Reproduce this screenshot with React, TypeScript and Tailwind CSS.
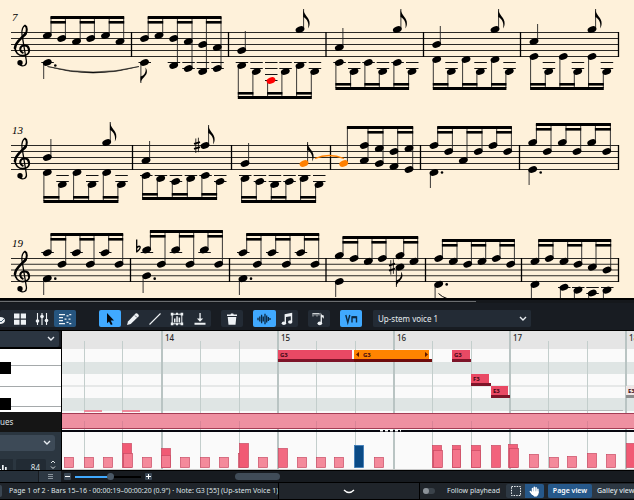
import React from "react";

/* ---------- score data ---------- */
/* Pitches are counted in half staff spaces downward from the top line. */

type Beam = {
  dir: "up" | "down";
  xs: number[];
  notes: number[][];
  y: number;
  pairs?: number[][];
};
type Single = {
  x: number;
  p: number;
  dir: "up" | "down";
  end: number;
  flag?: boolean;
  dot?: boolean;
  sharp?: boolean;
  color?: string;
};
type System = {
  top: number;
  space: number;
  label: string;
  bars: number[];
  beams: Beam[];
  singles: Single[];
};

const alt = (a: number, b: number) => [[a], [b], [a], [b], [a], [b]];
const each = (...p: number[]) => p.map((v) => [v]);

const systems: System[] = [
  {
    top: 32.5,
    space: 6,
    label: "7",
    bars: [131.5, 228.5, 326, 423.5, 520.5, 618.5],
    beams: [
      { dir: "up", xs: [47.3, 61.7, 76.5, 90.7, 105.5, 120], notes: each(1, 2, 3, 2, 1, 3), y: 16 },
      { dir: "up", xs: [144.5, 159, 173.7, 188.3, 202.7, 217.3], notes: [[2], [1], [2, 11], [3, 12], [4, 13], [5, 12]], y: 16 },
      { dir: "down", xs: [241.7, 256.3, 271, 285.3, 300, 314.7], notes: each(11, 13, 16, 13, 11, 13), y: 99 },
      { dir: "down", xs: [339.3, 354, 368.3, 382.7, 397.3, 412], notes: alt(10, 13), y: 90 },
      { dir: "down", xs: [436.7, 451.3, 466, 480.3, 495, 509.3], notes: alt(9, 13), y: 90 },
      { dir: "down", xs: [534, 548.7, 563.3, 577.7, 592, 606.7], notes: alt(8, 13), y: 90 },
    ],
    singles: [
      { x: 47.3, p: 10, dir: "down", end: 79, dot: true },
      { x: 144.5, p: 10, dir: "down", end: 83, flag: true },
      { x: 241.7, p: 6, dir: "up", end: 31 },
      { x: 300, p: -1, dir: "up", end: 9, flag: true },
      { x: 339.3, p: 5, dir: "up", end: 28 },
      { x: 397.3, p: -1, dir: "up", end: 9, flag: true },
      { x: 436.7, p: 4, dir: "up", end: 26 },
      { x: 495, p: -1, dir: "up", end: 9, flag: true },
      { x: 534, p: 3, dir: "up", end: 24 },
      { x: 592, p: -1, dir: "up", end: 9, flag: true },
    ],
  },
  {
    top: 145.5,
    space: 6,
    label: "13",
    bars: [132.5, 231.5, 330.5, 420.5, 519.5, 618.5],
    beams: [
      { dir: "down", xs: [47.3, 62.3, 77, 92, 106.7, 121.3], notes: alt(9, 13), y: 203 },
      { dir: "down", xs: [146, 160.7, 175.7, 190.7, 205.3, 220], notes: each(10, 11, 12, 11, 10, 12), y: 200 },
      { dir: "down", xs: [245, 259.7, 274.7, 289.3, 304, 319], notes: each(11, 12, 13, 12, 11, 13), y: 203 },
      { dir: "up", xs: [343.7, 364.3, 379.3, 394, 409], notes: [[6], [0, 5], [1, 6], [2, 7], [1, 8]], y: 126, pairs: [[1, 2], [3, 4]] },
      { dir: "up", xs: [434, 448.7, 463.3, 478.3, 493, 507.7], notes: each(0, 2, 5, 2, 0, 2), y: 126 },
      { dir: "up", xs: [532.7, 547.3, 562.3, 577, 591.7, 606.7], notes: alt(-1, 2), y: 123 },
    ],
    singles: [
      { x: 47.3, p: 4, dir: "up", end: 139 },
      { x: 106.7, p: -1, dir: "up", end: 122, flag: true },
      { x: 146, p: 5, dir: "up", end: 141 },
      { x: 205, p: 0, dir: "up", end: 125, flag: true, sharp: true },
      { x: 245, p: 6, dir: "up", end: 143 },
      { x: 304, p: 6, dir: "up", end: 142, flag: true, color: "#ff8000" },
      { x: 434, p: 9, dir: "down", end: 188, dot: true },
      { x: 532.7, p: 8, dir: "down", end: 185, dot: true },
    ],
  },
  {
    top: 258.5,
    space: 5.75,
    label: "19",
    bars: [130.5, 229.5, 326, 425.5, 521.5, 618.5],
    beams: [
      { dir: "up", xs: [47.3, 62, 76.3, 90.3, 105, 119], notes: alt(-2, 2), y: 233 },
      { dir: "up", xs: [146.7, 161.3, 175.7, 190, 204.3, 218.7], notes: alt(-3, 2), y: 230 },
      { dir: "up", xs: [243, 257.3, 272, 286.3, 300.7, 315], notes: alt(-2, 2), y: 233 },
      { dir: "up", xs: [339.3, 354, 368.3, 382.3, 400, 414], notes: each(-1, 0, 1, 0, -1, 1), y: 236 },
      { dir: "up", xs: [438.7, 453.3, 467.7, 482, 496.3, 510.7], notes: each(0, 1, 2, 1, 0, 2), y: 239 },
      { dir: "up", xs: [535, 549.3, 564, 578, 592.3, 607], notes: each(1, 0, 1, 2, 3, 4), y: 239 },
    ],
    singles: [
      { x: 47.3, p: 7, dir: "down", end: 295, dot: true },
      { x: 146.7, p: 6, dir: "down", end: 293, dot: true },
      { x: 243, p: 7, dir: "down", end: 295, dot: true },
      { x: 339.3, p: 8, dir: "down", end: 297 },
      { x: 400, p: 3, dir: "down", end: 287, flag: true, sharp: true },
      { x: 438.7, p: 9, dir: "down", end: 300, dot: true },
      { x: 535, p: 9, dir: "down", end: 300 },
      { x: 564, p: 10, dir: "down", end: 300 },
      { x: 578, p: 11, dir: "down", end: 300 },
      { x: 592.3, p: 12, dir: "down", end: 300 },
      { x: 607, p: 11, dir: "down", end: 300 },
    ],
  },
];

function Head({ x, y, p, step, color }: { x: number; y: number; p: number; step: number; color?: string }) {
  const ledgers: number[] = [];
  for (let l = 10; l <= p; l += 2) ledgers.push(l);
  for (let l = -2; l >= p; l -= 2) ledgers.push(l);
  return (
    <g>
      {ledgers.map((l) => {
        const ly = Math.floor(y + (l - p) * step) + 0.5;
        return <line key={l} x1={x - 6} x2={x + 6.5} y1={ly} y2={ly} stroke="#111" />;
      })}
      <ellipse cx={x} cy={y} rx="4.6" ry="3.1" fill={color || "#000"} transform={`rotate(-24 ${x} ${y})`} />
    </g>
  );
}

function Sharp({ x, y }: { x: number; y: number }) {
  return (
    <g stroke="#000" fill="none">
      <path d={`M${x - 1.2} ${y - 7}v14.5M${x + 1.4} ${y - 7.8}v14.5`} strokeWidth=".8" />
      <path d={`M${x - 3} ${y - 1.6}l6-1.8M${x - 3} ${y + 3.4}l6-1.8`} strokeWidth="1.8" />
    </g>
  );
}

function Clef({ top }: { top: number }) {
  return (
    <g transform={`translate(0 ${top - 32.5}) scale(.3333)`} fill="none" stroke="#000" strokeLinecap="round">
      <path d="M60 195C68 200 82 198 79 182L66 104C64 90 69 78 75 76" strokeWidth="3.8" />
      <path d="M75 77C82 80 82 94 76 103" strokeWidth="6" />
      <path d="M77 100C70 112 46 124 45 144" strokeWidth="8" />
      <path d="M45 142C45 158 56 167 68 167C80 167 88 160 88 150" strokeWidth="5" />
      <path d="M87 152C87 141 81 136 73 136C65 136 60 142 61 149C62 154 65 157 68 158" strokeWidth="6.5" />
      <circle cx="60" cy="188" r="8" fill="#000" stroke="none" />
    </g>
  );
}

function BeamGroup({ b, top, step }: { b: Beam; top: number; step: number }) {
  const up = b.dir === "up";
  const sx = b.xs.map((x) => (up ? x + 3.7 : x - 3.4));
  const outer = up ? b.y : b.y - 3;
  const inner = up ? b.y + 5 : b.y - 7;
  const pairs = b.pairs || [[0, 1], [2, 3], [4, 5]];
  return (
    <g>
      {b.xs.map((x, i) => {
        const ps = b.notes[i];
        const far = up ? Math.max(...ps) : Math.min(...ps);
        return (
          <g key={i}>
            <line x1={sx[i]} x2={sx[i]} y1={outer + 1} y2={top + far * step} stroke="#222" strokeWidth=".9" />
            {ps.map((p) => (
              <Head
                key={p}
                x={x}
                p={p}
                y={top + p * step}
                step={step}
                color={p === 16 ? "#ff0000" : b.pairs && i === 0 ? "#ff8000" : undefined}
              />
            ))}
          </g>
        );
      })}
      <rect x={sx[0] - 0.5} y={outer} width={sx[sx.length - 1] - sx[0] + 1} height="3" />
      {pairs.map(([a, c]) => (
        <rect key={a} x={sx[a] - 0.5} y={inner} width={sx[c] - sx[a] + 1} height="2.6" />
      ))}
    </g>
  );
}

function SingleNote({ n, top, step }: { n: Single; top: number; step: number }) {
  const up = n.dir === "up";
  const y = top + n.p * step;
  const sx = up ? n.x + 3.6 : n.x - 3.6;
  return (
    <g>
      <line x1={sx} x2={sx} y1={y} y2={n.end} stroke="#222" strokeWidth=".9" />
      <Head x={n.x} y={y} p={n.p} step={step} color={n.color} />
      {n.flag && (
        <path
          d="M-.4 0C0 6 6.500 9 6 14.500C6 16 5.500 18 4.500 19.500C5.500 14.500 4 10 -.4 8Z"
          transform={`translate(${sx} ${n.end}) scale(1 ${up ? 1 : -0.8})`}
        />
      )}
      {n.dot && <circle cx={n.x + 8} cy={n.p % 2 ? y : y + step} r="1.3" />}
      {n.sharp && <Sharp x={n.x - 8} y={y} />}
    </g>
  );
}

function Score() {
  return (
    <section aria-label="Score" className="overflow-hidden bg-[#fef1da]">
      <svg width="634" height="298" className="block">
        {systems.map((s) => {
          const step = s.space / 2;
          const bottom = s.top + s.space * 4;
          return (
            <g key={s.label}>
              {[0, 1, 2, 3, 4].map((i) => (
                <line key={i} x1="11" x2="618" y1={s.top + i * s.space} y2={s.top + i * s.space} stroke="#2a2824" />
              ))}
              {s.bars.map((x) => (
                <line key={x} x1={x} x2={x} y1={s.top - 0.5} y2={bottom + 0.5} stroke="#000" strokeWidth="1.3" />
              ))}
              <text x="12" y={s.top - 12} fontSize="11" fontStyle="italic" fontFamily="'Liberation Serif', serif">
                {s.label}
              </text>
              <Clef top={s.top} />
              {s.beams.map((b, i) => (
                <BeamGroup key={i} b={b} top={s.top} step={step} />
              ))}
              {s.singles.map((n, i) => (
                <SingleNote key={i} n={n} top={s.top} step={step} />
              ))}
            </g>
          );
        })}
        <path d="M47.500 66.500Q93 77.500 139 66.500Q93 79.500 47.500 66.500Z" stroke="#111" strokeWidth=".6" />
        <path d="M315 158.500Q329 152.500 344 158.500" fill="none" stroke="#ff8000" strokeWidth="1.3" />
        <path d="M438.500 293.500Q442 297 447 298.500" fill="none" stroke="#000" />
        <path d="M136.700 239.500V252.500M136.700 252Q141 248.500 140 246.500Q138.500 245.500 136.700 248" fill="none" stroke="#000" strokeWidth="1.3" />
      </svg>
    </section>
  );
}

/* ---------- toolbar ---------- */

function Chevron({ className = "" }: { className?: string }) {
  return (
    <svg width="8" height="6" viewBox="0 0 8 6" className={className} fill="none" stroke="#e8edf2" strokeWidth="1.4">
      <path d="M1 1l3 3 3-3" />
    </svg>
  );
}

function ToolButton({ label, active, children }: { label: string; active?: string; children: React.ReactNode }) {
  return (
    <button
      type="button"
      aria-label={label}
      className={`flex h-full flex-1 items-center justify-center rounded-[2px] ${active || ""}`}
    >
      <svg width="14" height="14" viewBox="0 0 14 14" className="shrink-0" fill="#eef2f5" stroke="none">
        {children}
      </svg>
    </button>
  );
}

const BLUE = "bg-[#40a9ff]";
const GROUP = "flex h-[17px] shrink-0 rounded-[2px] bg-[#232b35]";

function Toolbar() {
  return (
    <div role="toolbar" className="flex h-[27px] items-center bg-[#181c22] pt-1">
      <div className={`${GROUP} w-[76px]`}>
        <button type="button" aria-label="Note input" className="flex h-full w-[9px] items-center">
          <svg width="7" height="14" viewBox="0 0 7 14" fill="#eef2f5">
            <path d="M0 5Q5 5 5 9Q4 12 0 12Z" />
            <path d="M0 9l1 1 3-3" fill="none" stroke="#4a6476" />
          </svg>
        </button>
        <ToolButton label="Pads">
          <path d="M1 1.500h5.500v5H1zM7.800 1.500h5.200v5H7.800zM1 7.700h5.500v5H1zM7.800 7.700h5.200v5H7.800z" />
        </ToolButton>
        <ToolButton label="Mixer">
          <g stroke="#eef2f5" strokeWidth="1.1">
            <path d="M2.500 1v12M7 1v12M11.500 1v12" />
          </g>
          <circle cx="2.500" cy="9" r="1.800" />
          <circle cx="7" cy="4.500" r="1.800" />
          <circle cx="11.500" cy="8.500" r="1.800" />
        </ToolButton>
        <ToolButton label="Key editor" active="bg-[#26557f]">
          <path d="M1 2h6v1.300H1zM1 5h4v1.300H1zM1 8h4v1.300H1zM1 11h6v1.300H1zM8.500 3.200h2v1.300h-2zM6.500 6.500h2v1.300h-2zM8.500 9.700h2V11h-2zM11.300 2h2v1.300h-2zM10.500 6.500h2v1.300h-2zM11.300 11h2v1.300h-2z" />
        </ToolButton>
      </div>
      <div className={`${GROUP} ml-[23px] w-[112px]`}>
        <ToolButton label="Select" active={BLUE}>
          <path d="M4 1l7 7.400-3.300.2 1.900 3.700-1.700.8-1.900-3.700L4 11.300z" fill="#05080c" />
        </ToolButton>
        <ToolButton label="Draw">
          <path d="M1 13l1-3.600L9.600 1.600q.8-.8 1.700 0l1.200 1.200q.7.900 0 1.700L4.700 12.100z" />
          <path d="M9 3.500l2 2" stroke="#232b35" strokeWidth=".7" />
        </ToolButton>
        <ToolButton label="Line">
          <path d="M1.500 12.500L12.500 1.500" stroke="#eef2f5" strokeWidth="1.100" />
        </ToolButton>
        <ToolButton label="Transform">
          <path d="M2.200 2.200h9.600v9.600H2.200z" fill="none" stroke="#eef2f5" />
          <path d="M.8.800h2.600v2.600H.8zM10.600.800h2.600v2.600h-2.600zM.8 10.600h2.600v2.600H.8zM10.600 10.600h2.600v2.600h-2.600zM6 .8h2v2H6zM6 11.300h2v2H6zM4 6.500h1.500v4H4zM6.300 4.300h1.500v6.200H6.300zM8.600 5.500h1.500v5H8.600z" />
        </ToolButton>
        <ToolButton label="Fix">
          <path d="M6.400 1h1.300v5.500h2.500L7 9.800 3.900 6.500h2.500zM1.500 10.800h11v2h-11z" />
        </ToolButton>
      </div>
      <div className={`${GROUP} ml-[10px] w-[22px]`}>
        <ToolButton label="Delete">
          <path d="M2 2.500h3.500l.5-1h2.200l.5 1H12V4H2zM2.700 5h8.600l-.8 7.800h-7z" />
        </ToolButton>
      </div>
      <div className={`${GROUP} ml-[10px] w-[45px]`}>
        <ToolButton label="Played durations" active={BLUE}>
          <path d="M1 5.800v2.400M2.800 4.500v5M4.600 2.800v8.400M6.300 4.500v5M8 1.800v10.400M9.700 3.500v7M11.400 5v4M13 6v2" stroke="#0c2a44" strokeWidth="1.300" />
        </ToolButton>
        <ToolButton label="Notated durations">
          <path d="M4.600 2.200L12.200.800v9h-1.400V4.200L6 5.100v6H4.600z" />
          <ellipse cx="3.900" cy="11.200" rx="2.200" ry="1.800" />
          <ellipse cx="10.200" cy="10" rx="2.200" ry="1.800" />
        </ToolButton>
      </div>
      <div className={`${GROUP} ml-[10px] w-[22px]`}>
        <ToolButton label="Quantize">
          <path d="M.5 1.500h7M1 1.500v3M3 1.500v2M5 1.500v3M7 1.500v2" stroke="#eef2f5" strokeWidth=".8" />
          <path d="M8.600.500q.5 2.500 3.200 3v3.200Q10.500 5 9.900 5v6H8.600z" />
          <ellipse cx="7.800" cy="11.300" rx="2.300" ry="1.900" />
        </ToolButton>
      </div>
      <div className={`${GROUP} ml-[10px] w-[22px]`}>
        <ToolButton label="Playing techniques" active={BLUE}>
          <path d="M1.800 3l2 7.500L5.800 3M8 10.500V5h4.500v5.500" fill="none" stroke="#0c2a44" strokeWidth="1.400" />
          <path d="M8 4.300h4.500v2H8z" fill="#0c2a44" />
        </ToolButton>
      </div>
      <div className={`${GROUP} relative ml-[11px] w-[158px]`}>
        <select
          aria-label="Voice"
          className="h-full w-full appearance-none rounded-[2px] bg-[#232b35] pl-[5px] text-[8px] leading-[16px] text-[#e6ebf0]"
        >
          <option>Up-stem voice 1</option>
        </select>
        <Chevron className="pointer-events-none absolute top-[6px] right-[4px]" />
      </div>
    </div>
  );
}

/* ---------- piano roll ---------- */

const barLines = [
  { x: 100, n: "14" },
  { x: 216, n: "15" },
  { x: 332, n: "16" },
  { x: 448, n: "17" },
  { x: 564, n: "18" },
];
const beatLines = [22, 60, 138, 177, 254, 293, 370, 409, 486, 525];

/* x, top, width, colour */
const velocities: [number, number, number, string][] = [
  [2, 457, 10, "#f48a9b"],
  [22, 457, 10, "#f48a9b"],
  [41, 457, 10, "#f48a9b"],
  [60, 443, 10, "#f15a74"],
  [61, 453, 10, "#f47d91"],
  [80, 457, 10, "#f48a9b"],
  [99, 448, 10, "#f15a74"],
  [99, 455, 10, "#f47d91"],
  [118, 457, 10, "#f48a9b"],
  [138, 457, 10, "#f48a9b"],
  [157, 457, 10, "#f48a9b"],
  [176, 453, 10, "#f47d91"],
  [177, 443, 10, "#f15a74"],
  [196, 457, 10, "#f48a9b"],
  [216, 448, 10, "#f26a82"],
  [235, 457, 10, "#f48a9b"],
  [254, 457, 10, "#f48a9b"],
  [272, 457, 10, "#f48a9b"],
  [292, 445, 10, "#0a4a85"],
  [312, 457, 10, "#f48a9b"],
  [370, 445, 10, "#f2637c"],
  [371, 450, 10, "#f4758b"],
  [390, 445, 9, "#f2637c"],
  [390, 449, 9, "#f4758b"],
  [409, 445, 10, "#f2637c"],
  [409, 450, 10, "#f4758b"],
  [429, 445, 10, "#f2637c"],
  [446, 444, 10, "#f2637c"],
  [447, 448, 10, "#f26a82"],
  [467, 454, 10, "#f48598"],
  [487, 457, 10, "#f48a9b"],
  [505, 456, 10, "#f48598"],
  [525, 453, 10, "#f47d91"],
  [544, 454, 10, "#f48598"],
  [564, 443, 10, "#f15a74"],
];

/* x, y, note width, played width, name, fill, base */
const events: [number, number, number, number, string, string, string][] = [
  [216, 350, 74, 76, "G3", "#e94964", "#7d1428"],
  [292, 350, 75, 78, "G3", "#ff8400", "#6e0c0c"],
  [390, 350, 18, 19, "G3", "#e94964", "#7d1428"],
  [409, 374, 18, 20, "F3", "#e94964", "#7d1428"],
  [429, 386, 17, 19, "E3", "#e94964", "#7d1428"],
  [564, 386, 17, 19, "E3", "#efe6e6", "#8c8c8c"],
];

function Roll() {
  return (
    <div className="min-w-0 flex-1 overflow-hidden bg-[#fafafa]">
      <svg width="100%" height="139" className="block" fontFamily="'Noto Sans', sans-serif">
        <g transform="translate(0 -331)">
          <rect y="331" width="100%" height="18" fill="#e5e5e5" />
          <rect y="362" width="100%" height="12" fill="#dfe5e4" />
          <rect y="385" width="100%" height="2" fill="#e6e8e8" />
          <rect y="398" width="100%" height="13" fill="#dfe5e4" />
          {beatLines.map((x) => (
            <rect key={x} x={x} y="341" width="1" height="127" fill="#c3cecc" />
          ))}
          {barLines.map((b) => (
            <g key={b.n}>
              <rect x={b.x - 1} y="331" width="2" height="138" fill="#b9c4c3" />
              <text x={b.x + 3} y="341" fontSize="8" fontWeight="500" fill="#2a2a2a">
                {b.n}
              </text>
            </g>
          ))}
          <rect x="22" y="410" width="18" height="2" fill="#ee8a9b" />
          <rect x="60" y="410" width="18" height="2" fill="#ee8a9b" />
          <rect x="448" y="410" width="113" height="1" fill="#b5b9b9" />
          {events.map(([x, y, w, base, name, fill, dark]) => (
            <g key={`${x}-${y}`}>
              <rect x={x} y={y} width={w} height="9" fill={fill} />
              <rect x={x} y={y + 9} width={base} height="3" fill={dark} />
              <text x={x + (w === 75 ? 9 : 2)} y={y + 7} fontSize="6" fontWeight="700" fill="#400612">
                {name}
              </text>
            </g>
          ))}
          <path d="M297 352v5l-3-2.500zM363 352v5l3-2.500z" fill="#5c1700" />
          <rect y="413" width="100%" height="16" fill="#a43c54" />
          <rect y="414" width="100%" height="14" fill="#ee90a1" />
          {beatLines.map((x) => (
            <rect key={x} x={x} y="421" width="1" height="7" fill="#d98496" />
          ))}
          <rect y="430" width="100%" height="2" fill="#07070f" />
          <path d="M318 430.500h21" stroke="#fff" strokeWidth="2" strokeDasharray="3 2" />
          {velocities.map(([x, y, w, fill]) => (
            <rect
              key={`${x}-${y}`}
              x={x + 0.5}
              y={y + 0.5}
              width={w - 1}
              height={467 - y}
              fill={fill}
              stroke={fill === "#0a4a85" ? "#2f74b5" : "#c94a63"}
              strokeWidth=".7"
            />
          ))}
          <rect y="469" width="100%" height="1" fill="#c9c9c9" />
        </g>
      </svg>
    </div>
  );
}

function Keys() {
  return (
    <svg width="61" height="63" className="block">
      <rect width="61" height="63" fill="#fff" />
      <path d="M11 16.500h50M0 37.500h61M11 57.500h50" stroke="#a5a9ab" />
      <path d="M0 13h11v12H0zM0 49h11v12H0z" fill="#000" />
    </svg>
  );
}

function Sidebar() {
  return (
    <div className="w-[62px] shrink-0 border-r border-black bg-[#2b3640]">
      <div className="h-[18px] border-b-2 border-black bg-[#181c22] pr-[2px]">
        <button type="button" aria-label="Instrument" className="flex h-4 w-full items-center justify-end rounded-r-[2px] bg-[#2b3541] pr-1">
          <Chevron />
        </button>
      </div>
      <Keys />
      <div className="flex h-5 items-center bg-[#151515] text-[8px] text-[#dfe3e6]">ues</div>
      <div className="h-[38px] overflow-hidden pt-[3px]">
        <button type="button" aria-label="Lane type" className="flex h-4 w-[55px] items-center justify-end rounded-r-[3px] bg-[#3d4a57] pr-1">
          <Chevron />
        </button>
        <div className="mt-2 flex h-4 gap-[3px]">
          <button type="button" aria-label="Histogram" className="w-[13px] bg-[#222b34]">
            <svg width="9" height="12" className="block" fill="#eef2f5">
              <path d="M0 8h1v4H0zM2 4h1.700v8H2zM5 6h1.700v6H5z" />
            </svg>
          </button>
          <input
            aria-label="Velocity"
            defaultValue="84"
            className="h-4 w-[30px] rounded-[2px] bg-[#222b34] pr-[6px] text-right text-[8px] text-[#dfe3e6]"
          />
          <svg width="8" height="12" fill="none" stroke="#dfe3e6" className="block">
            <path d="M2 4l2-2 2 2M2 7.500l2 2 2-2" />
          </svg>
        </div>
      </div>
    </div>
  );
}

function ZoomRow() {
  const small = "flex h-[7px] w-[7px] items-center justify-center rounded-[1px] bg-[#3a4754]";
  return (
    <div className="flex h-[12px] items-center border-t border-black bg-[#171b20]">
      <div className="h-full w-[38px] bg-[#26303a]" />
      <button type="button" aria-label="Lane menu" className="ml-px flex h-full w-[22px] items-center justify-center bg-[#2d3843]">
        <svg width="5" height="5" stroke="#8a949d">
          <path d="M0 .5h5M0 2.500h5M0 4.500h5" />
        </svg>
      </button>
      <button type="button" aria-label="Zoom out" className={`${small} ml-[3px]`}>
        <svg width="5" height="5" stroke="#fff"><path d="M0 2.500h5" /></svg>
      </button>
      <div className="relative ml-1 h-3 w-[66px]">
        <div className="absolute top-[5px] left-0 h-[2px] w-full bg-black" />
        <div className="absolute top-[5px] left-0 h-[2px] w-[36px] bg-[#40a9ff]" />
        <input
          type="range"
          aria-label="Zoom"
          defaultValue="54"
          className="absolute inset-0 h-full w-full appearance-none bg-transparent [&::-webkit-slider-thumb]:h-[7px] [&::-webkit-slider-thumb]:w-[7px] [&::-webkit-slider-thumb]:appearance-none [&::-webkit-slider-thumb]:rounded-full [&::-webkit-slider-thumb]:bg-[#4a5866]"
        />
      </div>
      <button type="button" aria-label="Zoom in" className={`${small} ml-1`}>
        <svg width="5" height="5" stroke="#fff"><path d="M0 2.500h5M2.500 0v5" /></svg>
      </button>
      <div className="ml-[83px] h-[7px] w-[45px] rounded-full bg-[#404c58]" />
    </div>
  );
}

function StatusBar() {
  return (
    <footer className="flex h-[17px] items-center overflow-hidden border-b border-black bg-[#20252b] text-[7px] whitespace-nowrap text-[#dfe4e8]">
      <div className="h-3 w-[2px] rounded-r-[2px] bg-[#3a4652]" />
      <div className="w-[276px] shrink-0 pl-[7px]">
        Page 1 of 2 · Bars 15–16 · 00:00:19–00:00:20 (0.9") · Note: G3 [55] (Up-stem Voice 1)
      </div>
      <button type="button" aria-label="Show panel" className="flex h-full w-[142px] shrink-0 items-center justify-center border-x border-black">
        <svg width="12" height="5" fill="none" stroke="#fff" strokeWidth="1.400">
          <path d="M1 1q2.500 2.500 5 2.500t5-2.500" />
        </svg>
      </button>
      <label className="flex w-[86px] shrink-0 items-center pl-[3px]">
        <input type="checkbox" className="peer sr-only" />
        <span className="mr-3 flex h-[6px] w-3 items-center rounded-full bg-[#3a424a]">
          <span className="h-[6px] w-[6px] rounded-full bg-[#8b9299]" />
        </span>
        Follow playhead
      </label>
      <div className="flex h-[14px] shrink-0 overflow-hidden rounded-[2px] bg-[#2d3843]">
        <button type="button" aria-label="Marquee tool" className="flex w-[19px] items-center justify-center">
          <svg width="10" height="10" fill="none" stroke="#eef2f5" strokeDasharray="1.500 1.100">
            <path d="M.5.500h9v9h-9z" />
          </svg>
        </button>
        <button type="button" aria-label="Hand tool" className="flex w-[19px] items-center justify-center bg-[#26588a]">
          <svg width="11" height="11" viewBox="0 0 11 11" fill="none" stroke="#fff" strokeLinecap="round">
            <path d="M3.500 2.500v4M5.300 1.200v5M7.100 1.700v5M8.900 3.300v3.500M1.300 5.500l2.200 2.800" strokeWidth="1.500" />
            <path d="M3.500 5.500h5.800V7q0 2.500-1.800 3.300H5.200L3 8z" fill="#fff" strokeWidth=".5" />
          </svg>
        </button>
      </div>
      <div className="ml-1 flex h-[14px] min-w-0 flex-1 overflow-hidden bg-[#2d3843]">
        <button type="button" className="w-11 shrink-0 rounded-[2px] bg-[#26588a] font-semibold text-white">Page view</button>
        <button type="button" className="shrink-0 pl-[5px] font-medium">Galley view</button>
      </div>
    </footer>
  );
}

export default function App() {
  return (
    <main className="w-full overflow-hidden bg-[#0d0f12] font-['Noto_Sans',sans-serif]">
      <Score />
      <div className="h-[5px] border-t-2 border-black bg-[#15181c] pt-[1px]">
        <div className="h-px w-3/4 bg-[#6a6d70]" />
      </div>
      <Toolbar />
      <div className="flex border-t border-black">
        <Sidebar />
        <Roll />
      </div>
      <ZoomRow />
      <div className="h-px bg-black" />
      <StatusBar />
    </main>
  );
}
